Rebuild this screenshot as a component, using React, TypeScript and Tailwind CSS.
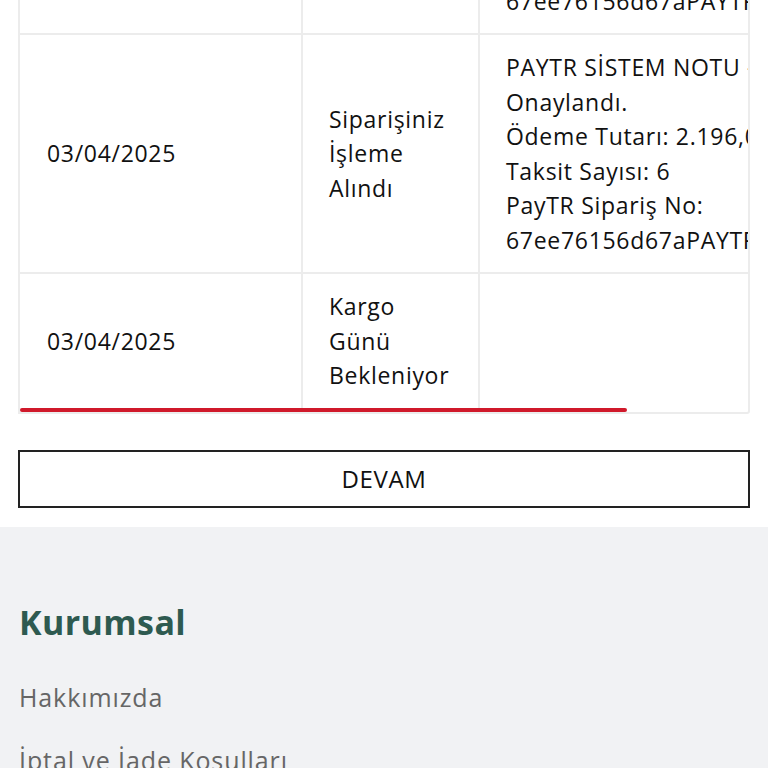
import React from 'react';

type Row = { date: string; status: string[]; note: string[] };

const paytrNote = [
  'PAYTR SİSTEM NOTU - Ödeme',
  'Onaylandı.',
  'Ödeme Tutarı: 2.196,00 TL',
  'Taksit Sayısı: 6',
  'PayTR Sipariş No:',
  '67ee76156d67aPAYTR2025',
];

const rows: Row[] = [
  { date: '03/04/2025', status: ['Siparişiniz', 'Alındı'], note: paytrNote },
  { date: '03/04/2025', status: ['Siparişiniz', 'İşleme', 'Alındı'], note: paytrNote },
  { date: '03/04/2025', status: ['Kargo', 'Günü', 'Bekleniyor'], note: [] },
];

const HistoryTable = () => {
  return (
    <div className="mx-[18px] mt-[-206px] rounded-br-[3px] border-2 border-[#ececec] bg-white">
      <div className="overflow-hidden">
        <table className="w-[873px] border-collapse table-fixed">
          <colgroup>
            <col className="w-[282px]" />
            <col className="w-[177px]" />
            <col className="w-[414px]" />
          </colgroup>
          <tbody>
            {rows.map((row, i) => (
              <tr key={i} className={i > 0 ? 'border-t-2 border-[#ececec]' : ''}>
                <td className="align-middle px-[27px] py-[15px] whitespace-nowrap">{row.date}</td>
                <td className="align-middle border-l-2 border-[#ececec] px-[26px] py-[15px]">
                  {row.status.map((s) => (
                    <div key={s}>{s}</div>
                  ))}
                </td>
                <td className="align-middle border-l-2 border-[#ececec] px-[26px] py-[15px] whitespace-nowrap">
                  {row.note.map((n) => (
                    <div key={n}>{n}</div>
                  ))}
                </td>
              </tr>
            ))}
          </tbody>
        </table>
      </div>
      <div className="h-[4px] w-[607px] rounded-full bg-[#d0192b]" />
    </div>
  );
};

export default function App() {
  return (
    <div className="min-h-[768px] overflow-hidden bg-white text-[#111] font-['Open_Sans','Noto_Sans',sans-serif]">
      <div className="text-[23px] leading-[34.5px] tracking-[0.7px]">
        <HistoryTable />
      </div>
      <div className="px-[18px] pt-[36px] pb-[19px]">
        <button className="flex h-[58px] w-full items-center justify-center border-2 border-[#222] bg-white text-[24px] tracking-[0.6px] text-[#111]">
          DEVAM
        </button>
      </div>
      <footer className="bg-[#f1f2f4] px-[19px] pt-[72px] pb-[40px]">
        <h3 className="text-[34px] font-bold leading-[46px] tracking-[0.4px] text-[#2e5a50]">Kurumsal</h3>
        <ul className="mt-[33px] flex flex-col gap-[25px] text-[25px] leading-[38px] tracking-[0.9px] text-[#666]">
          <li>Hakkımızda</li>
          <li>İptal ve İade Koşulları</li>
          <li>Gizlilik Politikası</li>
        </ul>
      </footer>
    </div>
  );
}
